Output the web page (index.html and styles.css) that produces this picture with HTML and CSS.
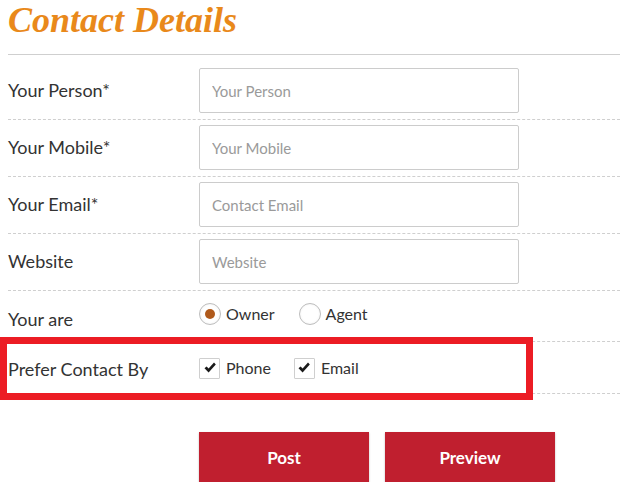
FILE: index.html
```html
<!DOCTYPE html>
<html>
<head>
<meta charset="utf-8">
<link rel="stylesheet" href="styles.css">
</head>
<body>
<div class="page">
  <h2 class="title">Contact Details</h2>
  <div class="rule"></div>
  <form class="form">
    <div class="row first">
      <label class="label">Your Person*</label>
      <input class="field" type="text" placeholder="Your Person">
    </div>
    <div class="row">
      <label class="label">Your Mobile*</label>
      <input class="field" type="text" placeholder="Your Mobile">
    </div>
    <div class="row">
      <label class="label">Your Email*</label>
      <input class="field" type="text" placeholder="Contact Email">
    </div>
    <div class="row">
      <label class="label">Website</label>
      <input class="field" type="text" placeholder="Website">
    </div>
    <div class="row choice radios">
      <label class="label">Your are</label>
      <div class="options">
        <span class="opt"><span class="radio on"><span class="dot"></span></span>Owner</span>
        <span class="opt"><span class="radio"></span>Agent</span>
      </div>
    </div>
    <div class="row choice checks">
      <label class="label">Prefer Contact By</label>
      <div class="options">
        <span class="opt"><span class="check"><svg viewBox="0 0 14 14" width="14" height="14"><path d="M1.5 7.2 L3.6 5.4 L5.6 7.6 L11 1.6 L12.8 3.4 L5.6 11.6 Z" fill="#1a1a1a"/></svg></span>Phone</span>
        <span class="opt"><span class="check"><svg viewBox="0 0 14 14" width="14" height="14"><path d="M1.5 7.2 L3.6 5.4 L5.6 7.6 L11 1.6 L12.8 3.4 L5.6 11.6 Z" fill="#1a1a1a"/></svg></span>Email</span>
      </div>
    </div>
    <div class="actions">
      <button type="button" class="btn">Post</button>
      <button type="button" class="btn">Preview</button>
    </div>
  </form>
  <div class="highlight"></div>
</div>
</body>
</html>
```

FILE: styles.css
```css
* { box-sizing: border-box; }
html, body { margin: 0; padding: 0; background: #fff; }
body { font-family: Lato, "Open Sans", sans-serif; color: #333; }
.page { position: relative; padding-left: 8px; width: 640px; }
.title {
  margin: 0;
  height: 46px;
  padding-top: 0;
  font-family: "Liberation Serif", "Times New Roman", serif;
  font-style: italic;
  font-weight: bold;
  font-size: 36px;
  line-height: 40px;
  color: #e9891b;
}
.rule { height: 9px; border-bottom: 1px solid #cfcfcf; }
.form { display: flex; flex-direction: column; }
.row {
  display: flex;
  align-items: center;
  padding: 5px 0 6px;
  border-bottom: 1px dashed #cfcfcf;
}
.row.first { padding-top: 13px; }
.label { width: 191px; font-size: 18px; line-height: 22px; color: #333; padding-bottom: 1px; }
.field {
  width: 320px;
  height: 45px;
  border: 1px solid #cccccc;
  border-radius: 2px;
  padding: 0 12px;
  font-family: Lato, sans-serif;
  font-size: 15px;
  color: #333;
  outline: none;
}
.field::placeholder { color: #9a9a9a; }
.choice { padding: 0; height: 51px; align-items: flex-start; }
.radios .label { padding-top: 17px; }
.radios .options { padding-top: 12px; gap: 24px; }
.checks { height: 52px; }
.checks .label { padding-top: 16px; }
.checks .options { padding-top: 15px; gap: 23px; }
.options { display: flex; font-size: 16px; color: #333; }
.opt { display: flex; align-items: center; gap: 5px; line-height: 22px; }
.radio {
  width: 22px; height: 22px;
  border-radius: 50%;
  border: 1px solid #bdbdbd;
  background: radial-gradient(circle, #fff 55%, #ececec 100%);
  display: flex; align-items: center; justify-content: center;
}
.dot { width: 10px; height: 10px; border-radius: 50%; background: #b05a1c; }
.check {
  width: 21px; height: 21px;
  border: 1px solid #cfcfcf;
  border-radius: 1px;
  display: flex; align-items: center; justify-content: center;
  margin-right: 1px;
}
.actions { display: flex; gap: 16px; padding: 38px 0 0 191px; }
.btn {
  width: 170px; height: 50px;
  border: none;
  background: #c01f2f;
  color: #fff;
  font-family: Lato, sans-serif;
  font-weight: bold;
  font-size: 17px;
  box-shadow: 0 1px 2px rgba(0,0,0,0.25);
}
.highlight {
  position: absolute;
  left: 0; top: 337px;
  width: 533px; height: 63px;
  border: 7px solid #ec1c24;
  pointer-events: none;
}
```
